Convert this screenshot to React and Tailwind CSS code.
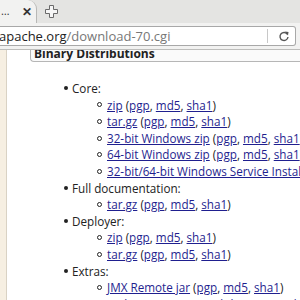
import React from 'react';

const core = [
  '32-bit Windows zip',
  '64-bit Windows zip',
];

function Sums() {
  return (
    <>
      {' ('}
      <a className="text-[#1f1f8f] underline">pgp</a>,{' '}
      <a className="text-[#1f1f8f] underline">md5</a>,{' '}
      <a className="text-[#1f1f8f] underline">sha1</a>)
    </>
  );
}

function Sub({ label, sums = true }) {
  return (
    <li className="flex items-center whitespace-nowrap">
      <span className="w-[5px] h-[5px] rounded-full border border-[#222] mr-[5px] shrink-0" />
      <span>
        <a className="text-[#1f1f8f] underline">{label}</a>
        {sums && <Sums />}
      </span>
    </li>
  );
}

function Item({ label, children }) {
  return (
    <li>
      <div className="flex items-center">
        <span className="w-[4px] h-[4px] rounded-full bg-[#222] mr-[4px] shrink-0" />
        <span>{label}</span>
      </div>
      <ul className="pl-[33px]">{children}</ul>
    </li>
  );
}

export default function App() {
  return (
    <div className="w-[300px] h-[300px] overflow-hidden bg-white flex flex-col" style={{ fontFamily: '"Open Sans", sans-serif' }}>
      {/* tab strip */}
      <div className="h-[23px] bg-[#e4e4e2] flex items-end shrink-0">
        <div className="h-[23px] w-[37px] bg-[#f2f2f1] border-r border-[#b8b8b6] rounded-tr-[9px] flex items-center pl-[1px] gap-[12px] text-[11px] text-[#333]">
          <span>…</span>
          <span className="font-bold text-[12px]">✕</span>
        </div>
        <div className="h-[23px] flex items-center pl-[8px]">
          <svg width="13" height="13" viewBox="0 0 13 13">
            <path d="M4.5 0.5h4v4h4v4h-4v4h-4v-4h-4v-4h4z" fill="#f6f6f6" stroke="#6a6a6a" strokeWidth="1" />
          </svg>
        </div>
      </div>
      {/* toolbar */}
      <div className="h-[27px] bg-[#f2f2f1] flex items-center pr-[4px] border-b border-[#bdbdbb] shrink-0">
        <div className="flex-1 h-[20px] bg-white border border-[#a8a8a8] rounded-r-[3px] border-l-0 flex items-center text-[13px] leading-none">
          <span className="text-[#222] -ml-[1px]">apache.org</span>
          <span className="text-[#777]">/download-70.cgi</span>
          <span className="ml-auto w-px h-[14px] bg-[#c8c8c8] mr-[10px]" />
          <svg width="12" height="12" viewBox="0 0 12 12" className="mr-[5px]">
            <path d="M9.5 4.5A4 4 0 1 0 10 7" fill="none" stroke="#555" strokeWidth="1.4" />
            <path d="M7 1.5l3.5 0.5-0.5 3.5z" fill="#555" />
          </svg>
        </div>
      </div>
      {/* page */}
      <div className="flex flex-1 min-h-0">
        <div className="w-[7px] bg-[#f6efe2] border-r border-[#d9d2c4] shrink-0" />
        <div className="flex-1 min-w-0 text-[11.7px] text-[#222] leading-[16.6px]">
          <div className="ml-[23px] h-[12px] border-l border-b border-[#b6b6b6] rounded-bl-[4px] bg-[#fafafa] pl-[3px] font-bold text-[12px] leading-[8.5px] whitespace-nowrap overflow-hidden">
            Binary Distributions
          </div>
          <ul className="pl-[57px] pt-[18px] whitespace-nowrap">
            <Item label="Core:">
              <Sub label="zip" />
              <Sub label="tar.gz" />
              {core.map((c) => (
                <Sub key={c} label={c} />
              ))}
              <Sub label="32-bit/64-bit Windows Service Installer" sums={false} />
            </Item>
            <Item label="Full documentation:">
              <Sub label="tar.gz" />
            </Item>
            <Item label="Deployer:">
              <Sub label="zip" />
              <Sub label="tar.gz" />
            </Item>
            <Item label="Extras:">
              <Sub label="JMX Remote jar" />
              <Sub label="Web services jar modules" />
            </Item>
          </ul>
        </div>
      </div>
    </div>
  );
}
